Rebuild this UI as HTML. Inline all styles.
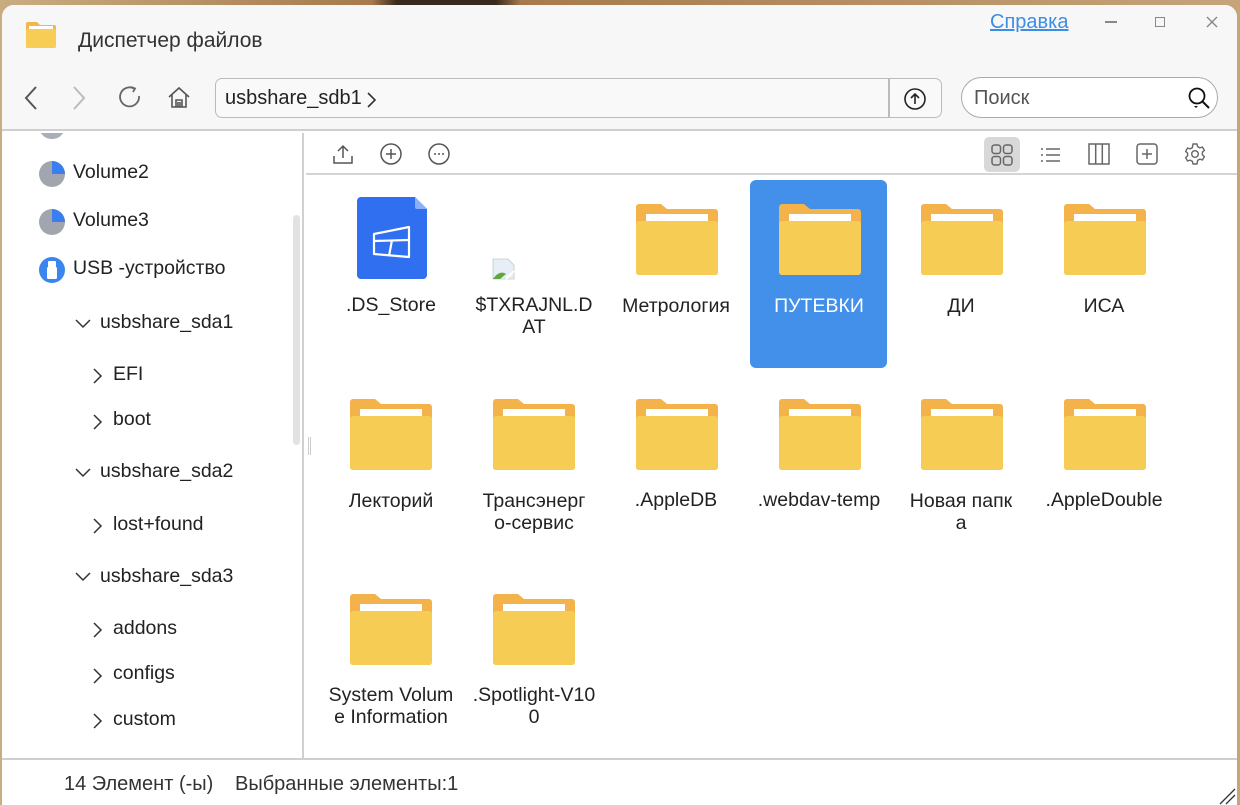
<!DOCTYPE html>
<html><head><meta charset="utf-8">
<style>
*{box-sizing:border-box;margin:0;padding:0}
body{width:1240px;height:800px;overflow:hidden;background:linear-gradient(90deg,#c9ad80 0%,#a67a4c 30%,#3a2a1e 32%,#3a2a1e 40%,#a67a4c 42%,#c6a57a 100%);font-family:"Liberation Sans","DejaVu Sans",sans-serif;color:#222;position:relative}
.win{position:absolute;left:2px;top:5px;width:1235px;height:800px;background:#fff;border-radius:12px 12px 0 0;overflow:hidden}
.hdr{position:absolute;left:0;top:0;width:100%;height:126px;background:#f7f7f7;border-bottom:2px solid #cfcfcf;z-index:2}
.t{position:absolute;white-space:nowrap}
.side{position:absolute;left:0;top:128px;width:302px;height:626px;border-right:2px solid #d0d0d0;background:#fff;overflow:hidden}
.side .t{font-size:19.5px}
.tb{position:absolute;left:304px;top:128px;right:0;height:42px;border-bottom:2px solid #d4d4d4}
.status{position:absolute;left:0;top:753px;width:100%;height:47px;border-top:2px solid #cfcfcf;background:#fff}
.it{position:absolute;width:140px;text-align:center;font-size:19.5px;line-height:22px;color:#222}
.fold{position:absolute;width:82px;height:71px}
</style></head><body>
<div class="win">
<div class="hdr">
  <svg style="position:absolute;left:24px;top:17px" width="30" height="26" viewBox="0 0 30 26"><path d="M2 0h9l3 3h14a2 2 0 0 1 2 2v19a2 2 0 0 1-2 2H2a2 2 0 0 1-2-2V2a2 2 0 0 1 2-2z" fill="#f3b64b"/><rect x="3" y="4" width="24" height="3" fill="#fff"/><rect x="0" y="7" width="30" height="19" rx="2" fill="#f7cd55"/></svg>
  <div class="t" style="left:76px;top:24px;font-size:21px;color:#333">Диспетчер файлов</div>
  <div class="t" style="left:988px;top:6px;font-size:20px;color:#3a8ee6;text-decoration:underline">Справка</div>
  <div class="t" style="left:1103px;top:16px;width:12px;height:1.5px;background:#888"></div>
  <div class="t" style="left:1153px;top:12px;width:10px;height:10px;border:1.5px solid #888"></div>
  <svg style="position:absolute;left:1204px;top:11px" width="12" height="12"><path d="M1 1L11 11M11 1L1 11" stroke="#888" stroke-width="1.4"/></svg>
  <svg style="position:absolute;left:20px;top:80px" width="18" height="26"><path d="M14 2L4 13L14 24" stroke="#555" stroke-width="2" fill="none"/></svg>
  <svg style="position:absolute;left:68px;top:80px" width="18" height="26"><path d="M4 2L14 13L4 24" stroke="#bbb" stroke-width="2" fill="none"/></svg>
  <svg style="position:absolute;left:116px;top:80px" width="24" height="24"><path d="M16 3.5A9.5 9.5 0 1 0 21 11" stroke="#666" stroke-width="1.8" fill="none"/><path d="M13 2l4 1.5-2 3.5" stroke="#666" stroke-width="1.8" fill="none"/></svg>
  <svg style="position:absolute;left:165px;top:81px" width="24" height="24"><path d="M2 11L12 2L22 11M5 9v12h14V9M9 21v-7h6v7M11 21v-5M13 21v-5" stroke="#555" stroke-width="1.6" fill="none"/></svg>
  <div class="t" style="left:213px;top:73px;width:727px;height:40px;border:1.5px solid #bbb;border-radius:7px;background:#f9f9f9"></div>
  <div class="t" style="left:886px;top:73px;width:1.5px;height:40px;background:#bbb"></div>
  <div class="t" style="left:223px;top:82px;font-size:20px;color:#222">usbshare_sdb1</div>
  <svg style="position:absolute;left:364px;top:86px" width="12" height="18"><path d="M2 2l7 7-7 7" stroke="#333" stroke-width="1.6" fill="none"/></svg>
  <svg style="position:absolute;left:902px;top:83px" width="22" height="22"><circle cx="11" cy="11" r="10" stroke="#222" stroke-width="1.6" fill="none"/><path d="M11 16V6M7 10l4-4 4 4" stroke="#222" stroke-width="1.6" fill="none"/></svg>
  <div class="t" style="left:959px;top:72px;width:257px;height:41px;border:1.5px solid #aaa;border-radius:21px;background:#fff"></div>
  <div class="t" style="left:972px;top:82px;font-size:20px;color:#555">Поиск</div>
  <svg style="position:absolute;left:1185px;top:81px" width="26" height="26"><circle cx="10" cy="10" r="7.5" stroke="#111" stroke-width="1.8" fill="none"/><path d="M15.5 15.5L22 22" stroke="#111" stroke-width="2"/><path d="M7 20l2 2 2-2z" fill="#111"/></svg>
</div>

<div class="side">
  <div class="t" style="left:38px;top:-14px;width:24px;height:20px;border-radius:50%;background:#a9aeb8"></div>
  <svg style="position:absolute;left:36px;top:27px" width="28" height="28"><circle cx="14" cy="14" r="13" fill="#a0a5ae"/><path d="M14 14V1A13 13 0 0 1 27 14z" fill="#3a7ef0"/></svg>
  <div class="t" style="left:71px;top:28px">Volume2</div>
  <svg style="position:absolute;left:36px;top:75px" width="28" height="28"><circle cx="14" cy="14" r="13" fill="#a0a5ae"/><path d="M14 14V1A13 13 0 0 1 27 14z" fill="#3a7ef0"/></svg>
  <div class="t" style="left:71px;top:76px">Volume3</div>
  <svg style="position:absolute;left:36px;top:123px" width="28" height="28"><circle cx="14" cy="14" r="13" fill="#3a86ee"/><rect x="10" y="5" width="8" height="7" rx="1" fill="#fff"/><rect x="9" y="11" width="10" height="12" rx="1.5" fill="#fff"/></svg>
  <div class="t" style="left:71px;top:124px">USB -устройство</div>
  <svg style="position:absolute;left:73px;top:185px" width="16" height="12"><path d="M1 2l7 7 7-7" stroke="#333" stroke-width="1.5" fill="none"/></svg>
  <div class="t" style="left:98px;top:178px">usbshare_sda1</div>
  <svg style="position:absolute;left:90px;top:234px" width="12" height="18"><path d="M2 2l7 7-7 7" stroke="#333" stroke-width="1.5" fill="none"/></svg>
  <div class="t" style="left:111px;top:230px">EFI</div>
  <svg style="position:absolute;left:90px;top:280px" width="12" height="18"><path d="M2 2l7 7-7 7" stroke="#333" stroke-width="1.5" fill="none"/></svg>
  <div class="t" style="left:111px;top:275px">boot</div>
  <svg style="position:absolute;left:73px;top:334px" width="16" height="12"><path d="M1 2l7 7 7-7" stroke="#333" stroke-width="1.5" fill="none"/></svg>
  <div class="t" style="left:98px;top:327px">usbshare_sda2</div>
  <svg style="position:absolute;left:90px;top:384px" width="12" height="18"><path d="M2 2l7 7-7 7" stroke="#333" stroke-width="1.5" fill="none"/></svg>
  <div class="t" style="left:111px;top:380px">lost+found</div>
  <svg style="position:absolute;left:73px;top:438px" width="16" height="12"><path d="M1 2l7 7 7-7" stroke="#333" stroke-width="1.5" fill="none"/></svg>
  <div class="t" style="left:98px;top:432px">usbshare_sda3</div>
  <svg style="position:absolute;left:90px;top:488px" width="12" height="18"><path d="M2 2l7 7-7 7" stroke="#333" stroke-width="1.5" fill="none"/></svg>
  <div class="t" style="left:111px;top:484px">addons</div>
  <svg style="position:absolute;left:90px;top:534px" width="12" height="18"><path d="M2 2l7 7-7 7" stroke="#333" stroke-width="1.5" fill="none"/></svg>
  <div class="t" style="left:111px;top:529px">configs</div>
  <svg style="position:absolute;left:90px;top:579px" width="12" height="18"><path d="M2 2l7 7-7 7" stroke="#333" stroke-width="1.5" fill="none"/></svg>
  <div class="t" style="left:111px;top:575px">custom</div>
  <div class="t" style="left:291px;top:82px;width:7px;height:230px;border-radius:4px;background:#e2e2e2"></div>
</div>

<div class="tb">
  <svg style="position:absolute;left:26px;top:10px" width="22" height="22"><path d="M11 15V3M6 8l5-5 5 5M2 13v7h18v-7" stroke="#555" stroke-width="1.5" fill="none"/></svg>
  <svg style="position:absolute;left:74px;top:10px" width="22" height="22"><circle cx="11" cy="11" r="10" stroke="#555" stroke-width="1.5" fill="none"/><path d="M11 6v10M6 11h10" stroke="#555" stroke-width="1.5"/></svg>
  <svg style="position:absolute;left:122px;top:10px" width="22" height="22"><circle cx="11" cy="11" r="10" stroke="#555" stroke-width="1.5" fill="none"/><circle cx="7" cy="11" r="1" fill="#555"/><circle cx="11" cy="11" r="1" fill="#555"/><circle cx="15" cy="11" r="1" fill="#555"/></svg>
  <div class="t" style="left:678px;top:4px;width:36px;height:35px;border-radius:5px;background:#d8d8d8"></div>
  <svg style="position:absolute;left:685px;top:11px" width="22" height="22"><g stroke="#666" stroke-width="1.5" fill="none"><rect x="1" y="1" width="8.5" height="8.5" rx="2.5"/><rect x="12.5" y="1" width="8.5" height="8.5" rx="2.5"/><rect x="1" y="12.5" width="8.5" height="8.5" rx="2.5"/><rect x="12.5" y="12.5" width="8.5" height="8.5" rx="2.5"/></g></svg>
  <svg style="position:absolute;left:734px;top:13px" width="22" height="18"><g stroke="#666" stroke-width="1.5"><path d="M1 3h2M6 3h14M1 9h2M6 9h14M1 15h2M6 15h14"/></g></svg>
  <svg style="position:absolute;left:782px;top:10px" width="22" height="22"><g stroke="#666" stroke-width="1.5" fill="none"><rect x="1" y="1" width="20" height="20"/><path d="M7.7 1v20M14.3 1v20"/></g></svg>
  <svg style="position:absolute;left:830px;top:10px" width="22" height="22"><rect x="1" y="1" width="20" height="20" rx="3" stroke="#666" stroke-width="1.5" fill="none"/><path d="M11 6v10M6 11h10" stroke="#666" stroke-width="1.5"/></svg>
  <svg style="position:absolute;left:878px;top:10px" width="22" height="22"><path d="M9 1h4l.6 2.6 2.3 1.3 2.5-.9 2 3.4-2 1.8v2.6l2 1.8-2 3.4-2.5-.9-2.3 1.3L13 21H9l-.6-2.6-2.3-1.3-2.5.9-2-3.4 2-1.8V10.2l-2-1.8 2-3.4 2.5.9 2.3-1.3z" stroke="#666" stroke-width="1.4" fill="none" stroke-linejoin="round"/><circle cx="11" cy="11" r="3.3" stroke="#666" stroke-width="1.4" fill="none"/></svg>
</div>
<div class="t" style="left:306px;top:432px;width:3px;height:18px;border-left:1px solid #ccc;border-right:1px solid #ccc"></div>

<svg width="0" height="0" style="position:absolute"><defs><g id="f"><path d="M3 0h22l6 5h48a3 3 0 0 1 3 3v60a3 3 0 0 1-3 3H3a3 3 0 0 1-3-3V3a3 3 0 0 1 3-3z" fill="#f3b24a"/><rect x="10" y="10" width="62" height="7" fill="#fff"/><rect x="0" y="17" width="82" height="54" rx="3" fill="#f7cc55"/></g></defs></svg>

<div class="t" style="left:748px;top:175px;width:137px;height:188px;border-radius:6px;background:#4390ea"></div>

<svg style="position:absolute;left:355px;top:192px" width="70" height="82"><path d="M4 0h54l12 12v66a4 4 0 0 1-4 4H4a4 4 0 0 1-4-4V4a4 4 0 0 1 4-4z" fill="#2f6ff0"/><path d="M58 0l12 12H60a2 2 0 0 1-2-2z" fill="#8bb0f8"/><g stroke="#fff" stroke-width="2.2" fill="none" stroke-linejoin="round"><path d="M17 37l35-7v30l-35-3z"/><path d="M17 44l35-1M35 43l-3 16"/></g></svg>
<div class="it" style="left:319px;top:289px">.DS_Store</div>
<svg style="position:absolute;left:490px;top:253px" width="24" height="24"><path d="M1 1h15l6 6v14H1z" fill="#e8eef5" stroke="#bcc" stroke-width=".8"/><path d="M1 21c4-6 9-8 13-5l-6 5z" fill="#5fa83c"/><path d="M14 21l8-8" stroke="#fff" stroke-width="2"/></svg>
<div class="it" style="left:462px;top:289px">$TXRAJNL.D<br>AT</div>
<svg class="fold" style="left:634px;top:199px"><use href="#f"/></svg>
<div class="it" style="left:604px;top:290px">Метрология</div>
<svg class="fold" style="left:777px;top:199px"><use href="#f"/></svg>
<div class="it" style="left:747px;top:290px;color:#fff">ПУТЕВКИ</div>
<svg class="fold" style="left:919px;top:199px"><use href="#f"/></svg>
<div class="it" style="left:889px;top:290px">ДИ</div>
<svg class="fold" style="left:1062px;top:199px"><use href="#f"/></svg>
<div class="it" style="left:1032px;top:290px">ИСА</div>
<svg class="fold" style="left:348px;top:394px"><use href="#f"/></svg>
<div class="it" style="left:319px;top:485px">Лекторий</div>
<svg class="fold" style="left:491px;top:394px"><use href="#f"/></svg>
<div class="it" style="left:462px;top:485px">Трансэнерг<br>о-сервис</div>
<svg class="fold" style="left:634px;top:394px"><use href="#f"/></svg>
<div class="it" style="left:604px;top:484px">.AppleDB</div>
<svg class="fold" style="left:777px;top:394px"><use href="#f"/></svg>
<div class="it" style="left:747px;top:484px">.webdav-temp</div>
<svg class="fold" style="left:919px;top:394px"><use href="#f"/></svg>
<div class="it" style="left:889px;top:485px">Новая папк<br>а</div>
<svg class="fold" style="left:1062px;top:394px"><use href="#f"/></svg>
<div class="it" style="left:1032px;top:484px">.AppleDouble</div>
<svg class="fold" style="left:348px;top:589px"><use href="#f"/></svg>
<div class="it" style="left:319px;top:679px">System Volum<br>e Information</div>
<svg class="fold" style="left:491px;top:589px"><use href="#f"/></svg>
<div class="it" style="left:462px;top:679px">.Spotlight-V10<br>0</div>

<div class="status">
  <div class="t" style="left:62px;top:13px;font-size:20px;color:#333">14 Элемент (-ы)</div>
  <div class="t" style="left:233px;top:13px;font-size:20px;color:#333">Выбранные элементы:1</div>
  <svg style="position:absolute;left:1215px;top:26px" width="20" height="20"><path d="M3 18L18 3M9 18L18 9" stroke="#333" stroke-width="1.3"/></svg>
</div>
</div>
</body></html>
